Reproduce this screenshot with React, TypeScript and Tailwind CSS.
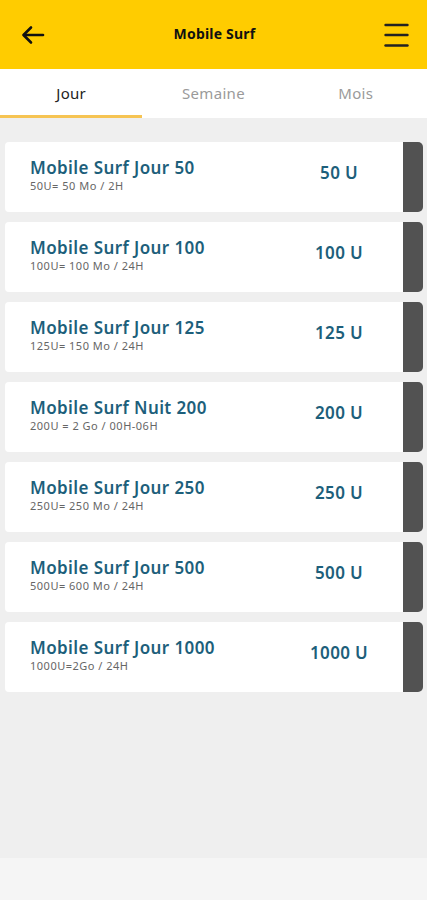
import { useState } from "react";

type Offer = { name: string; detail: string; price: string };

const OFFERS: Offer[] = [
  { name: "Mobile Surf Jour 50", detail: "50U= 50 Mo / 2H", price: "50 U" },
  { name: "Mobile Surf Jour 100", detail: "100U= 100 Mo / 24H", price: "100 U" },
  { name: "Mobile Surf Jour 125", detail: "125U= 150 Mo / 24H", price: "125 U" },
  { name: "Mobile Surf Nuit 200", detail: "200U = 2 Go / 00H-06H", price: "200 U" },
  { name: "Mobile Surf Jour 250", detail: "250U= 250 Mo / 24H", price: "250 U" },
  { name: "Mobile Surf Jour 500", detail: "500U= 600 Mo / 24H", price: "500 U" },
  { name: "Mobile Surf Jour 1000", detail: "1000U=2Go / 24H", price: "1000 U" },
];

const TABS = ["Jour", "Semaine", "Mois"];

export default function App() {
  const [tab, setTab] = useState(0);

  return (
    <div
      className="flex min-h-[900px] w-full flex-col bg-[#f5f5f5]"
      style={{ fontFamily: '"Noto Sans", "Open Sans", sans-serif' }}
    >
      <header className="flex h-[69px] items-center justify-between bg-[#ffcc00] pl-[21px] pr-[18px]">
        <svg width="24" height="20" viewBox="0 0 24 20" fill="none" stroke="#111" strokeWidth="2.6" strokeLinecap="round" strokeLinejoin="round">
          <path d="M22 10H3" />
          <path d="M10 2.5 2.5 10 10 17.5" />
        </svg>
        <h1 className="pb-[2px] text-[14px] font-bold tracking-[0.2px] text-[#111]">Mobile Surf</h1>
        <svg width="25" height="24" viewBox="0 0 25 24" fill="none" stroke="#222" strokeWidth="2.4" strokeLinecap="round">
          <path d="M1.5 2h22" />
          <path d="M1.5 12h22" />
          <path d="M1.5 22.5h22" />
        </svg>
      </header>

      <nav className="flex h-[49px] bg-white">
        {TABS.map((t, i) => (
          <button
            key={t}
            type="button"
            onClick={() => setTab(i)}
            className={`relative flex flex-1 items-center justify-center pb-[1px] text-[15px] tracking-[0.3px] ${
              tab === i ? "text-[#222]" : "text-[#9a9a9a]"
            }`}
          >
            {t}
            {tab === i && <span className="absolute bottom-0 left-0 h-[3px] w-full bg-[#f6c453]" />}
          </button>
        ))}
      </nav>

      <main className="flex h-[740px] flex-col gap-[10px] bg-[#efefef] pl-[5px] pr-[4px] pt-[24px]">
        {OFFERS.map((o) => (
          <div key={o.name} className="flex h-[70px]">
            <div className="flex flex-1 items-center rounded-l-[4px] bg-white pl-[25px]">
              <div className="flex flex-1 flex-col pb-[5px]">
                <span className="text-[17px] font-semibold leading-[23px] tracking-[0.4px] text-[#1d5f7b]">
                  {o.name}
                </span>
                <span className="text-[11px] leading-[14px] tracking-[0.5px] text-[#666]">{o.detail}</span>
              </div>
              <span className="w-[128px] pb-[8px] text-center text-[17px] font-semibold tracking-[0.3px] text-[#1d5f7b]">
                {o.price}
              </span>
            </div>
            <div className="w-[20px] rounded-r-[5px] bg-[#525252]" />
          </div>
        ))}
      </main>
    </div>
  );
}
